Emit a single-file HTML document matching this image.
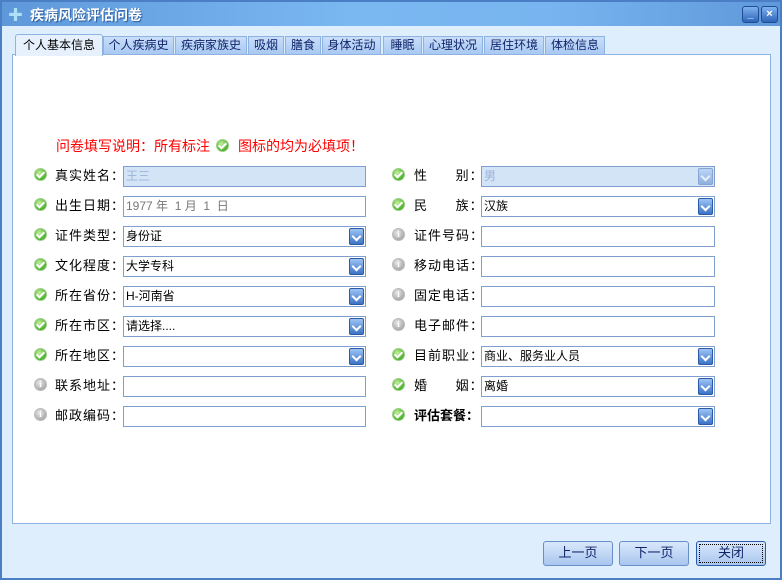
<!DOCTYPE html>
<html><head><meta charset="utf-8"><style>
*{margin:0;padding:0;box-sizing:border-box}
body{width:782px;height:580px;overflow:hidden;font-family:"Liberation Sans","Noto Sans CJK SC","WenQuanYi Zen Hei",sans-serif;font-size:12px;background:#fff}
.win{position:absolute;left:0;top:0;width:782px;height:580px;background:#dfeefc;border:2px solid #4a7fc6}
.title{position:absolute;left:0;top:0;width:778px;height:24px;background:linear-gradient(90deg,#5f98da 0%,#7ab8f2 45%,#78b5f0 70%,#5f98da 100%)}
.title span{position:absolute;left:28px;top:3px;color:#fff;font-weight:bold;font-size:14px;text-shadow:1px 1px 1px #2a5a9a}
.wb{position:absolute;top:4px;width:17px;height:17px;border:1px solid #1e4f95;border-radius:3px;background:linear-gradient(#7fb2ee,#2d64b8);color:#fff;font-weight:bold;font-size:11px;text-align:center;line-height:15px}
.panel{position:absolute;left:10px;top:52px;width:759px;height:470px;background:#fff;border:1px solid #8fb3e0}
.tab{position:absolute;top:34px;height:19px;background:linear-gradient(#c9defa,#a9c9f2);border:1px solid #8fb3e0;color:#10246a;font-size:12px;text-align:center;line-height:17px}
.tab.act{top:32px;height:22px;background:#e6f1fd;border-bottom:none;color:#000;line-height:21px;border-radius:3px 3px 0 0}
.lbl{position:absolute;font-size:13px;color:#000;line-height:16px;letter-spacing:1px}
.inp{position:absolute;height:21px;border:1px solid #7f9fd0;background:#fff;font-size:12px;line-height:19px;padding-left:2px}
.dd{position:absolute;right:1px;top:1px;width:15px;height:17px;border-radius:2px;background:linear-gradient(#9cc4f4,#3d72c5);border:1px solid #2b5aa8}
.dd:after{content:"";position:absolute;left:3px;top:4px;width:5px;height:5px;border-right:2px solid #fff;border-bottom:2px solid #fff;transform:rotate(45deg)}
.ok{position:absolute;width:13px;height:13px;border-radius:50%;background:radial-gradient(circle at 40% 35%,#c8f0a0,#4cb02c 70%,#2e8a1a);border:1px solid #9ccf88}
.ok:after{content:"";position:absolute;left:3px;top:1px;width:3px;height:6px;border-right:2px solid #fff;border-bottom:2px solid #fff;transform:rotate(45deg)}
.info{position:absolute;width:13px;height:13px;border-radius:50%;background:radial-gradient(circle at 40% 35%,#e8e8e8,#a8a8a8 75%);border:1px solid #bbb;color:#fff;font-size:9px;font-weight:bold;text-align:center;line-height:11px;font-family:"Liberation Serif",serif}
.btn{position:absolute;top:541px;width:70px;height:25px;border:1px solid #6a8fc6;border-radius:3px;background:linear-gradient(#d9e8fb,#a9c6ef);color:#10246a;font-size:13px;text-align:center;line-height:22px}
</style></head><body>
<div class="win">
<div class="title"><span style="left:6px;top:2px;color:#aee0f8;font-size:15px;text-shadow:none">✚</span><span>疾病风险评估问卷</span></div>
<div class="wb" style="left:740px">_</div><div class="wb" style="left:759px">×</div>
<div class="panel"></div>
<div class="tab act" style="left:13px;width:88px">个人基本信息</div>
<div class="tab" style="left:101px;width:71px">个人疾病史</div>
<div class="tab" style="left:173px;width:72px">疾病家族史</div>
<div class="tab" style="left:246px;width:36px">吸烟</div>
<div class="tab" style="left:283px;width:36px">膳食</div>
<div class="tab" style="left:320px;width:59px">身体活动</div>
<div class="tab" style="left:381px;width:39px">睡眠</div>
<div class="tab" style="left:421px;width:60px">心理状况</div>
<div class="tab" style="left:482px;width:60px">居住环境</div>
<div class="tab" style="left:543px;width:60px">体检信息</div>
</div>
<div class="lbl" style="left:56px;top:138px;color:#f00;font-size:14px;letter-spacing:0">问卷填写说明：所有标注</div>
<div class="ok" style="left:216px;top:139px"></div>
<div class="lbl" style="left:238px;top:138px;color:#f00;font-size:14px;letter-spacing:0">图标的均为必填项！</div>

<div class="ok" style="left:34px;top:168px"></div><div class="lbl" style="left:55px;top:168px">真实姓名：</div>
<div class="inp" style="left:123px;top:166px;width:243px;background:#d4e4f7;color:#99b3d8">王三</div>
<div class="ok" style="left:34px;top:198px"></div><div class="lbl" style="left:55px;top:198px">出生日期：</div>
<div class="inp" style="left:123px;top:196px;width:243px;color:#777">1977 年&nbsp; 1 月&nbsp; 1&nbsp; 日</div>
<div class="ok" style="left:34px;top:228px"></div><div class="lbl" style="left:55px;top:228px">证件类型：</div>
<div class="inp" style="left:123px;top:226px;width:243px">身份证<div class="dd"></div></div>
<div class="ok" style="left:34px;top:258px"></div><div class="lbl" style="left:55px;top:258px">文化程度：</div>
<div class="inp" style="left:123px;top:256px;width:243px">大学专科<div class="dd"></div></div>
<div class="ok" style="left:34px;top:288px"></div><div class="lbl" style="left:55px;top:288px">所在省份：</div>
<div class="inp" style="left:123px;top:286px;width:243px">H-河南省<div class="dd"></div></div>
<div class="ok" style="left:34px;top:318px"></div><div class="lbl" style="left:55px;top:318px">所在市区：</div>
<div class="inp" style="left:123px;top:316px;width:243px">请选择....<div class="dd"></div></div>
<div class="ok" style="left:34px;top:348px"></div><div class="lbl" style="left:55px;top:348px">所在地区：</div>
<div class="inp" style="left:123px;top:346px;width:243px"><div class="dd"></div></div>
<div class="info" style="left:34px;top:378px">i</div><div class="lbl" style="left:55px;top:378px">联系地址：</div>
<div class="inp" style="left:123px;top:376px;width:243px"></div>
<div class="info" style="left:34px;top:408px">i</div><div class="lbl" style="left:55px;top:408px">邮政编码：</div>
<div class="inp" style="left:123px;top:406px;width:243px"></div>

<div class="ok" style="left:392px;top:168px"></div><div class="lbl" style="left:414px;top:168px">性&nbsp;&nbsp;&nbsp;&nbsp;&nbsp; 别：</div>
<div class="inp" style="left:481px;top:166px;width:234px;background:#d4e4f7;color:#99b3d8">男<div class="dd" style="opacity:.45"></div></div>
<div class="ok" style="left:392px;top:198px"></div><div class="lbl" style="left:414px;top:198px">民&nbsp;&nbsp;&nbsp;&nbsp;&nbsp; 族：</div>
<div class="inp" style="left:481px;top:196px;width:234px">汉族<div class="dd"></div></div>
<div class="info" style="left:392px;top:228px">i</div><div class="lbl" style="left:414px;top:228px">证件号码：</div>
<div class="inp" style="left:481px;top:226px;width:234px"></div>
<div class="info" style="left:392px;top:258px">i</div><div class="lbl" style="left:414px;top:258px">移动电话：</div>
<div class="inp" style="left:481px;top:256px;width:234px"></div>
<div class="info" style="left:392px;top:288px">i</div><div class="lbl" style="left:414px;top:288px">固定电话：</div>
<div class="inp" style="left:481px;top:286px;width:234px"></div>
<div class="info" style="left:392px;top:318px">i</div><div class="lbl" style="left:414px;top:318px">电子邮件：</div>
<div class="inp" style="left:481px;top:316px;width:234px"></div>
<div class="ok" style="left:392px;top:348px"></div><div class="lbl" style="left:414px;top:348px">目前职业：</div>
<div class="inp" style="left:481px;top:346px;width:234px">商业、服务业人员<div class="dd"></div></div>
<div class="ok" style="left:392px;top:378px"></div><div class="lbl" style="left:414px;top:378px">婚&nbsp;&nbsp;&nbsp;&nbsp;&nbsp; 姻：</div>
<div class="inp" style="left:481px;top:376px;width:234px">离婚<div class="dd"></div></div>
<div class="ok" style="left:392px;top:408px"></div><div class="lbl" style="left:414px;top:408px;font-weight:bold;letter-spacing:0">评估套餐：</div>
<div class="inp" style="left:481px;top:406px;width:234px"><div class="dd"></div></div>

<div class="btn" style="left:543px">上一页</div>
<div class="btn" style="left:619px">下一页</div>
<div class="btn" style="left:696px;border-color:#2b5aa8;outline:1px dotted #000;outline-offset:-4px">关闭</div>
</body></html>
